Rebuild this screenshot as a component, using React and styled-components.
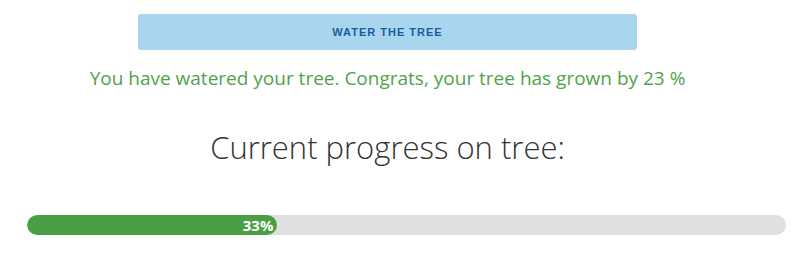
import React from 'react'
import styled, { createGlobalStyle } from 'styled-components'

const Global = createGlobalStyle`
  body {
    margin: 0;
    background: #fff;
    font-family: "Open Sans", "Noto Sans", sans-serif;
  }
`

export default function App() {
  const progress = 33
  return (
    <>
      <Global />
      <Page>
        <Center>
          <WaterButton>Water the tree</WaterButton>
          <Message>You have watered your tree. Congrats, your tree has grown by 23 %</Message>
          <Heading>Current progress on tree:</Heading>
        </Center>
        <BarRow>
          <Track>
            <Fill style={{ width: progress + '%' }}>{progress}%</Fill>
          </Track>
        </BarRow>
      </Page>
    </>
  )
}

const Page = styled.div`
  width: 806px;
  padding-top: 14px;`
const Center = styled.div`
  width: 775px;
  display: flex;
  flex-direction: column;
  align-items: center;`
const WaterButton = styled.button`
  width: 499px;
  height: 36px;
  border: none;
  border-radius: 3px;
  background: #a9d5ef;
  color: #1b5c9e;
  font-family: "Liberation Sans", Arial, sans-serif;
  font-weight: 700;
  font-size: 11px;
  letter-spacing: 1px;
  text-transform: uppercase;`
const Message = styled.p`
  margin: 16px 0 0;
  color: #52a24c;
  font-size: 19px;
  line-height: 24px;`
const Heading = styled.h2`
  margin: 36px 0 0;
  color: #333;
  font-weight: 300;
  font-size: 31px;
  line-height: 42px;`
const BarRow = styled.div`
  padding: 47px 20px 0 27px;`
const Track = styled.div`
  height: 20px;
  border-radius: 10px;
  background: #e0e0e0;
  overflow: hidden;`
const Fill = styled.div`
  height: 100%;
  border-radius: 10px;
  background: #4a9f45;
  color: #fff;
  font-weight: 700;
  font-size: 15px;
  line-height: 20px;
  text-align: right;
  padding-right: 4px;
  box-sizing: border-box;`
